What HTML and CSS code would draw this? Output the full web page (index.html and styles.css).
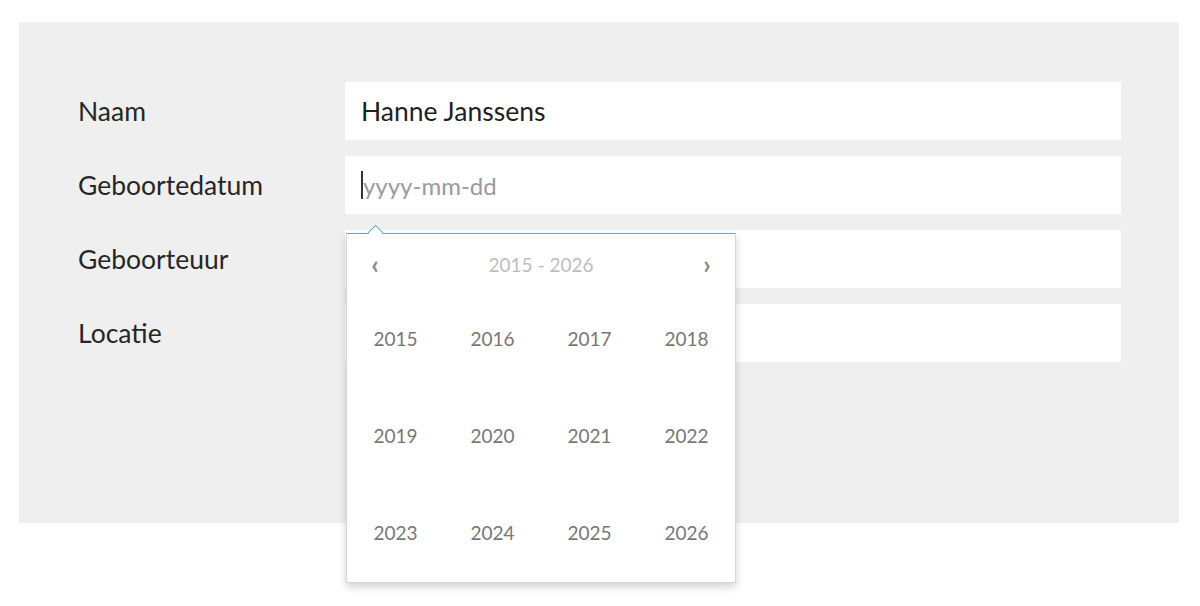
FILE: index.html
```html
<!DOCTYPE html>
<html lang="nl">
<head>
<meta charset="utf-8">
<title>Formulier</title>
<link rel="stylesheet" href="styles.css">
</head>
<body>
<div class="panel">
  <form class="form">
    <label class="label">Naam</label>
    <div class="field"><span class="value">Hanne Janssens</span></div>

    <label class="label">Geboortedatum</label>
    <div class="field field-date">
      <span class="caret"></span><span class="placeholder">yyyy-mm-dd</span>
      <div class="picker">
        <span class="notch"></span>
        <div class="picker-head">
          <span class="nav">&#8249;</span>
          <span class="range">2015 - 2026</span>
          <span class="nav">&#8250;</span>
        </div>
        <div class="years">
          <span class="year">2015</span><span class="year">2016</span><span class="year">2017</span><span class="year">2018</span>
          <span class="year">2019</span><span class="year">2020</span><span class="year">2021</span><span class="year">2022</span>
          <span class="year">2023</span><span class="year">2024</span><span class="year">2025</span><span class="year">2026</span>
        </div>
      </div>
    </div>

    <label class="label">Geboorteuur</label>
    <div class="field"></div>

    <label class="label">Locatie</label>
    <div class="field"></div>
  </form>
</div>
</body>
</html>
```

FILE: styles.css
```css
html, body {
  margin: 0;
  padding: 0;
  background: #ffffff;
}

body {
  min-height: 606px;
  font-family: "Lato", "Noto Sans", sans-serif;
  color: #222;
}

.panel {
  margin: 22px 0 0 19px;
  width: 1160px;
  height: 501px;
  background: #efefef;
  box-sizing: border-box;
  padding: 60px 58px 0 59px;
}

.form {
  display: grid;
  grid-template-columns: 267px 1fr;
  grid-auto-rows: 58px;
  row-gap: 16px;
}

.label {
  display: flex;
  align-items: center;
  font-size: 26.5px;
  color: #262626;
}

.field {
  position: relative;
  background: #fff;
  display: flex;
  align-items: center;
  padding-left: 16px;
  font-size: 26.5px;
}

.value {
  color: #1f1f1f;
}

.caret {
  display: inline-block;
  width: 2px;
  height: 28px;
  background: #333;
}

.placeholder {
  color: #9a9a9a;
  font-size: 24px;
}

.picker {
  position: absolute;
  top: calc(100% + 19px);
  left: 1px;
  width: 390px;
  height: 350px;
  box-sizing: border-box;
  background: #fff;
  border: 1px solid #d6d6d6;
  border-top: 1px solid #6aa6ba;
  box-shadow: 0 4px 8px rgba(0, 0, 0, 0.18);
  z-index: 10;
}

.notch {
  position: absolute;
  top: -7px;
  left: 23px;
  width: 10px;
  height: 10px;
  background: #fff;
  border-top: 1px solid #6aa6ba;
  border-left: 1px solid #6aa6ba;
  transform: rotate(45deg);
}

.picker-head {
  height: 56px;
  display: flex;
  align-items: center;
  justify-content: space-between;
  padding: 4px 22px 0 22px;
  box-sizing: border-box;
}

.nav {
  font-size: 26px;
  font-weight: 700;
  color: #8a8a8a;
  width: 12px;
  text-align: center;
}

.range {
  font-size: 19px;
  color: #bdbdbd;
}

.years {
  display: grid;
  grid-template-columns: repeat(4, 1fr);
  grid-template-rows: repeat(3, 97px);
}

.year {
  display: flex;
  align-items: center;
  justify-content: center;
  font-size: 19px;
  color: #777;
}
```
